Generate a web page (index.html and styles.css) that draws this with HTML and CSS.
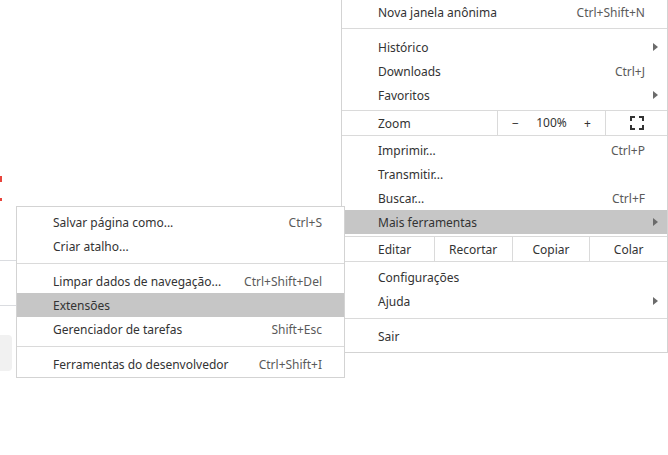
FILE: index.html
```html
<!DOCTYPE html>
<html lang="pt-BR">
<head>
<meta charset="utf-8">
<title>Menu</title>
<link rel="stylesheet" href="styles.css">
</head>
<body>
<div class="page">
  <div class="strip">
    <div class="red red-a"></div>
    <div class="red red-b"></div>
    <div class="hline hline-1"></div>
    <div class="hline hline-2"></div>
    <div class="graybox"></div>
  </div>
</div>

<div class="menu main-menu">
  <div class="item"><span class="label">Nova janela anônima</span><span class="key">Ctrl+Shift+N</span></div>
  <div class="sep sep-a"></div>
  <div class="item"><span class="label">Histórico</span><span class="arrow"></span></div>
  <div class="item"><span class="label">Downloads</span><span class="key">Ctrl+J</span></div>
  <div class="item"><span class="label">Favoritos</span><span class="arrow"></span></div>
  <div class="zoom-row">
    <span class="zoom-label">Zoom</span>
    <div class="zoom-ctrl"><span class="zbtn">−</span><span class="zval">100%</span><span class="zbtn">+</span></div>
    <div class="zoom-full">
      <svg width="14" height="14" viewBox="0 0 14 14" aria-hidden="true">
        <path d="M1 5V1h4M9 1h4v4M13 9v4H9M5 13H1V9" fill="none" stroke="#333" stroke-width="2"/>
      </svg>
    </div>
  </div>
  <div class="item first-after"><span class="label">Imprimir...</span><span class="key">Ctrl+P</span></div>
  <div class="item"><span class="label">Transmitir...</span></div>
  <div class="item"><span class="label">Buscar...</span><span class="key">Ctrl+F</span></div>
  <div class="item active"><span class="label">Mais ferramentas</span><span class="arrow"></span></div>
  <div class="edit-row">
    <span class="edit-label">Editar</span>
    <span class="ebtn">Recortar</span>
    <span class="ebtn">Copiar</span>
    <span class="ebtn">Colar</span>
  </div>
  <div class="item"><span class="label">Configurações</span></div>
  <div class="item"><span class="label">Ajuda</span><span class="arrow"></span></div>
  <div class="sep sep-b"></div>
  <div class="item"><span class="label">Sair</span></div>
</div>

<div class="menu sub-menu">
  <div class="item"><span class="label">Salvar página como...</span><span class="key">Ctrl+S</span></div>
  <div class="item"><span class="label">Criar atalho...</span></div>
  <div class="sep"></div>
  <div class="item"><span class="label">Limpar dados de navegação...</span><span class="key">Ctrl+Shift+Del</span></div>
  <div class="item active"><span class="label">Extensões</span></div>
  <div class="item"><span class="label">Gerenciador de tarefas</span><span class="key">Shift+Esc</span></div>
  <div class="sep"></div>
  <div class="item"><span class="label">Ferramentas do desenvolvedor</span><span class="key">Ctrl+Shift+I</span></div>
</div>
</body>
</html>
```

FILE: styles.css
```css
* { box-sizing: border-box; }

html, body {
  margin: 0;
  padding: 0;
}

body {
  width: 668px;
  height: 455px;
  background: #ffffff;
  position: relative;
  overflow: hidden;
  font-family: "Noto Sans", "Open Sans", sans-serif;
  font-size: 12px;
  color: #333333;
}

/* background page fragment */
.page {
  height: 455px;
}

.strip {
  width: 16px;
  display: flex;
  flex-direction: column;
  padding-top: 176px;
}

.red {
  width: 2px;
  background: #e8453c;
}

.red-a {
  height: 6px;
}

.red-b {
  height: 3px;
  margin-top: 16px;
}

.hline {
  height: 1px;
  background: #dadce0;
  width: 16px;
}

.hline-1 { margin-top: 59px; }
.hline-2 { margin-top: 44px; }

.graybox {
  margin-top: 29px;
  width: 12px;
  height: 36px;
  background: #f1f1f1;
  border-radius: 0 4px 4px 0;
}

/* menus */
.menu {
  position: absolute;
  background: #ffffff;
  border: 1px solid #d3d3d3;
  display: flex;
  flex-direction: column;
}

.main-menu {
  left: 341px;
  top: -1px;
  width: 327px;
  height: 354px;
  border-top: none;
}

.sub-menu {
  left: 16px;
  top: 206px;
  width: 329px;
  padding: 3px 0 1px;
}

.item {
  height: 24px;
  display: flex;
  align-items: center;
  padding: 0 22px 0 36px;
  flex-shrink: 0;
}

.item .label {
  flex: 1;
  white-space: nowrap;
}

.key {
  color: #5a5a5a;
  white-space: nowrap;
}

.item.active {
  background: #c6c6c6;
}

.arrow {
  width: 0;
  height: 0;
  border-top: 4px solid transparent;
  border-bottom: 4px solid transparent;
  border-left: 5px solid #6b6b6b;
  margin-right: -13px;
}

.sep {
  height: 1px;
  background: #dadada;
  margin: 5px 0;
  flex-shrink: 0;
}

.main-menu > .item:first-child {
  margin-top: 1px;
}

.sep-a { margin: 4px 0 6px; }
.sep-b { margin: 5px 0 5px; }

.zoom-row,
.edit-row {
  display: flex;
  height: 26px;
  border-top: 1px solid #dadada;
  border-bottom: 1px solid #dadada;
  flex-shrink: 0;
}

.zoom-row {
  margin-top: 3px;
}

.edit-row {
  margin-top: 2px;
}

.zoom-label,
.edit-label {
  display: flex;
  align-items: center;
  padding-left: 36px;
}

.zoom-label {
  width: 155px;
}

.zoom-ctrl {
  width: 109px;
  border-left: 1px solid #dadada;
  border-right: 1px solid #dadada;
  display: flex;
  align-items: center;
  justify-content: space-between;
  padding: 0 14px 0 14px;
}

.zval {
  margin-top: -1px;
}

.zoom-full {
  flex: 1;
  display: flex;
  align-items: center;
  justify-content: center;
}

.edit-label {
  width: 92px;
}

.ebtn {
  width: 78px;
  border-left: 1px solid #dadada;
  display: flex;
  align-items: center;
  justify-content: center;
}

.first-after {
  margin-top: 2px;
}

.edit-row + .item {
  margin-top: 3px;
}
```
